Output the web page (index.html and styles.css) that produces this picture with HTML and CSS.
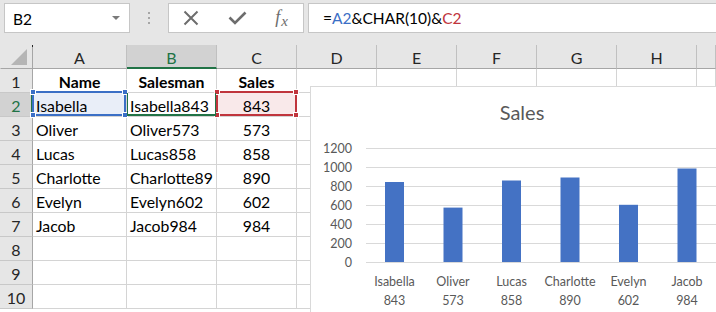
FILE: index.html
```html
<!DOCTYPE html>
<html>
<head>
<meta charset="utf-8">
<link rel="stylesheet" href="styles.css">
</head>
<body>
<div class="toolbar">
  <div class="namebox"><span>B2</span><svg class="dd" width="8" height="5" viewBox="0 0 8 5"><path d="M0 0H8L4 4Z" fill="#7a7a7a"/></svg></div>
  <div class="grip"><i></i><i></i><i></i></div>
  <div class="fxbtns">
    <svg width="16" height="16" viewBox="0 0 16 16"><path d="M1.5 1.5L14.5 14.5M14.5 1.5L1.5 14.5" stroke="#6d6d6d" stroke-width="2" fill="none"/></svg>
    <svg width="19" height="14" viewBox="0 0 19 14"><path d="M1.5 6.5L7 12L17.5 1.5" stroke="#6d6d6d" stroke-width="2.6" fill="none"/></svg>
    <span class="fx"><span>f</span><span class="x">x</span></span>
  </div>
  <div class="formula">=<span class="ref-a">A2</span>&amp;CHAR(10)&amp;<span class="ref-c">C2</span></div>
</div>

<div class="sheet">
  <div class="h corner"><svg width="16" height="16" viewBox="0 0 16 16"><path d="M16 0V16H0Z" fill="#b5b5b5"/></svg></div>
  <div class="h">A</div><div class="h sel-col">B</div><div class="h">C</div><div class="h">D</div><div class="h">E</div><div class="h">F</div><div class="h">G</div><div class="h">H</div><div class="h"></div>

  <div class="rh">1</div><div class="c b ctr">Name</div><div class="c b ctr">Salesman</div><div class="c b ctr">Sales</div><div class="c"></div><div class="c"></div><div class="c"></div><div class="c"></div><div class="c"></div><div class="c"></div>

  <div class="rh sel-row">2</div>
  <div class="c fill-a">Isabella<span class="box box-a"><i class="q tl"></i><i class="q tr"></i><i class="q bl"></i><i class="q br"></i></span></div>
  <div class="c">Isabella843<span class="box box-b"></span></div>
  <div class="c ctr fill-c">843<span class="box box-c"><i class="q tl"></i><i class="q tr"></i><i class="q bl"></i><i class="q br"></i></span></div>
  <div class="c"></div><div class="c"></div><div class="c"></div><div class="c"></div><div class="c"></div><div class="c"></div>

  <div class="rh">3</div><div class="c">Oliver</div><div class="c">Oliver573</div><div class="c ctr">573</div><div class="c"></div><div class="c"></div><div class="c"></div><div class="c"></div><div class="c"></div><div class="c"></div>
  <div class="rh">4</div><div class="c">Lucas</div><div class="c">Lucas858</div><div class="c ctr">858</div><div class="c"></div><div class="c"></div><div class="c"></div><div class="c"></div><div class="c"></div><div class="c"></div>
  <div class="rh">5</div><div class="c">Charlotte</div><div class="c">Charlotte89</div><div class="c ctr">890</div><div class="c"></div><div class="c"></div><div class="c"></div><div class="c"></div><div class="c"></div><div class="c"></div>
  <div class="rh">6</div><div class="c">Evelyn</div><div class="c">Evelyn602</div><div class="c ctr">602</div><div class="c"></div><div class="c"></div><div class="c"></div><div class="c"></div><div class="c"></div><div class="c"></div>
  <div class="rh">7</div><div class="c">Jacob</div><div class="c">Jacob984</div><div class="c ctr">984</div><div class="c"></div><div class="c"></div><div class="c"></div><div class="c"></div><div class="c"></div><div class="c"></div>
  <div class="rh">8</div><div class="c"></div><div class="c"></div><div class="c"></div><div class="c"></div><div class="c"></div><div class="c"></div><div class="c"></div><div class="c"></div><div class="c"></div>
  <div class="rh">9</div><div class="c"></div><div class="c"></div><div class="c"></div><div class="c"></div><div class="c"></div><div class="c"></div><div class="c"></div><div class="c"></div><div class="c"></div>
  <div class="rh">10</div><div class="c"></div><div class="c"></div><div class="c"></div><div class="c"></div><div class="c"></div><div class="c"></div><div class="c"></div><div class="c"></div><div class="c"></div>
</div>

<div class="chart">
  <svg width="405" height="225" viewBox="311 87 405 225">
    <text x="522" y="120" class="title" text-anchor="middle">Sales</text>
    <g stroke="#d9d9d9" stroke-width="1">
      <path d="M366 148.5H716M366 167.5H716M366 186.5H716M366 205.5H716M366 224.5H716M366 243.5H716M366 262.5H716"/>
    </g>
    <g class="ax" text-anchor="end">
      <text x="352" y="153">1200</text>
      <text x="352" y="172">1000</text>
      <text x="352" y="191">800</text>
      <text x="352" y="210">600</text>
      <text x="352" y="229">400</text>
      <text x="352" y="248">200</text>
      <text x="352" y="267">0</text>
    </g>
    <g fill="#4472c4">
      <rect x="385" y="182" width="19" height="80"/>
      <rect x="443.5" y="207.6" width="19" height="54.4"/>
      <rect x="502" y="180.5" width="19" height="81.5"/>
      <rect x="560.5" y="177.5" width="19" height="84.5"/>
      <rect x="619" y="204.8" width="19" height="57.2"/>
      <rect x="677.5" y="168.5" width="19" height="93.5"/>
    </g>
    <g class="ax" text-anchor="middle">
      <text x="394.5" y="286">Isabella</text><text x="394.5" y="305">843</text>
      <text x="453" y="286">Oliver</text><text x="453" y="305">573</text>
      <text x="511.5" y="286">Lucas</text><text x="511.5" y="305">858</text>
      <text x="570" y="286">Charlotte</text><text x="570" y="305">890</text>
      <text x="628.5" y="286">Evelyn</text><text x="628.5" y="305">602</text>
      <text x="687" y="286">Jacob</text><text x="687" y="305">984</text>
    </g>
  </svg>
</div>
</body>
</html>
```

FILE: styles.css
```css
html, body {
  margin: 0;
  padding: 0;
}
body {
  width: 716px;
  height: 312px;
  overflow: hidden;
  position: relative;
  background: #ffffff;
  font-family: Lato, "Liberation Sans", sans-serif;
  font-size: 15.8px;
  color: #000;
}
.toolbar {
  height: 45px;
  box-sizing: border-box;
  background: #e6e6e6;
  display: flex;
  align-items: flex-start;
  padding: 3px 0 0 4px;
}
.namebox {
  width: 126px;
  height: 30px;
  box-sizing: border-box;
  background: #fff;
  border: 1px solid #c6c6c6;
  display: flex;
  align-items: center;
  justify-content: space-between;
  padding: 0 9px 0 8px;
  font-size: 15.5px;
}
.namebox span { margin-top: 1px; }
.dd { margin-top: 1px; }
.grip {
  width: 38px;
  height: 30px;
  display: flex;
  flex-direction: column;
  align-items: center;
  justify-content: center;
  gap: 3px;
}
.grip i {
  display: block;
  width: 2px;
  height: 2px;
  background: #a6a6a6;
}
.fxbtns {
  width: 136px;
  height: 30px;
  box-sizing: border-box;
  background: #fff;
  border: 1px solid #c6c6c6;
  display: flex;
  align-items: center;
  padding: 0 15px 0 14px;
  justify-content: space-between;
}
.fx {
  font-family: "Liberation Serif", serif;
  font-style: italic;
  font-size: 18px;
  color: #6d6d6d;
  display: flex;
  align-items: flex-end;
  margin-top: -2px;
}
.fx .x { font-size: 15px; margin-left: 1px; position: relative; top: 2px; }
.formula {
  flex: 1;
  margin-left: 4px;
  height: 30px;
  box-sizing: border-box;
  background: #fff;
  border: 1px solid #c6c6c6;
  border-right: none;
  display: flex;
  align-items: center;
  padding-left: 14px;
  font-size: 15.5px;
  white-space: pre;
}
.ref-a { color: #3b6fc6; }
.ref-c { color: #c0353d; }

.sheet {
  display: grid;
  grid-template-columns: 33px 94px 90px 80px 80px 80px 80px 80px 80px 1fr;
  grid-auto-rows: 24px;
}
.h {
  background: #e6e6e6;
  border-right: 1px solid #c0c0c0;
  border-bottom: 1px solid #a6a6a6;
  display: flex;
  align-items: center;
  justify-content: center;
  font-size: 16px;
  color: #262626;
  box-sizing: border-box;
  padding-top: 1px;
}
.corner {
  border-right: 1px solid #a6a6a6;
  border-left: 1px solid transparent;
  align-items: flex-end;
  justify-content: flex-end;
  padding: 0 5px 3px 0;
  position: relative;
}
.corner::before {
  content: "";
  position: absolute;
  left: 31px;
  top: 0;
  width: 1px;
  height: 2px;
  background: #222;
}
.sel-col {
  background: #d2d2d2;
  color: #217346;
  border-bottom: 2px solid #217346;
  padding-top: 2px;
}
.rh {
  background: #e6e6e6;
  border-right: 1px solid #a6a6a6;
  border-bottom: 1px solid #c8c8c8;
  display: flex;
  align-items: center;
  justify-content: center;
  font-size: 16px;
  color: #262626;
  box-sizing: border-box;
  padding-top: 1px;
}
.sel-row {
  background: #d2d2d2;
  color: #217346;
  border-right: 2px solid #217346;
  padding-left: 1px;
}
.c {
  border-right: 1px solid #d4d4d4;
  border-bottom: 1px solid #d4d4d4;
  box-sizing: border-box;
  padding: 1px 3px 0 3px;
  display: flex;
  align-items: center;
  white-space: nowrap;
  overflow: hidden;
  position: relative;
}
.c.b { font-weight: bold; }
.ctr { justify-content: center; }
.fill-a { background: #e9eef8; overflow: visible; }
.fill-c { background: #f9e9ea; overflow: visible; }
.box {
  position: absolute;
  top: -2px;
  box-sizing: border-box;
  border: 2px solid;
  height: 25px;
  z-index: 2;
}
.box-a { left: -1px; width: 94px; border-color: #3b6fc6; }
.box-b { left: -1px; width: 91px; border-color: #217346; z-index: 3; }
.box-c { left: -1px; width: 81px; border-color: #c0353d; }
.q {
  position: absolute;
  width: 6px;
  height: 6px;
  box-sizing: border-box;
  border: 1px solid #fff;
}
.box-a .q { background: #3b6fc6; }
.box-c .q { background: #c0353d; }
.q.tl { left: -4px; top: -4px; }
.q.tr { right: -4px; top: -4px; }
.q.bl { left: -4px; bottom: -4px; }
.q.br { right: -4px; bottom: -4px; }

.chart {
  position: absolute;
  left: 310px;
  top: 86px;
  width: 405px;
  height: 225px;
  background: #fff;
  border: 1px solid #d9d9d9;
  border-right: none;
  border-bottom: none;
  z-index: 5;
}
.chart svg { display: block; }
.title {
  font-family: Lato, "Liberation Sans", sans-serif;
  font-size: 20px;
  fill: #595959;
}
.ax text {
  font-family: Lato, "Liberation Sans", sans-serif;
  font-size: 12.5px;
  fill: #595959;
}
```
